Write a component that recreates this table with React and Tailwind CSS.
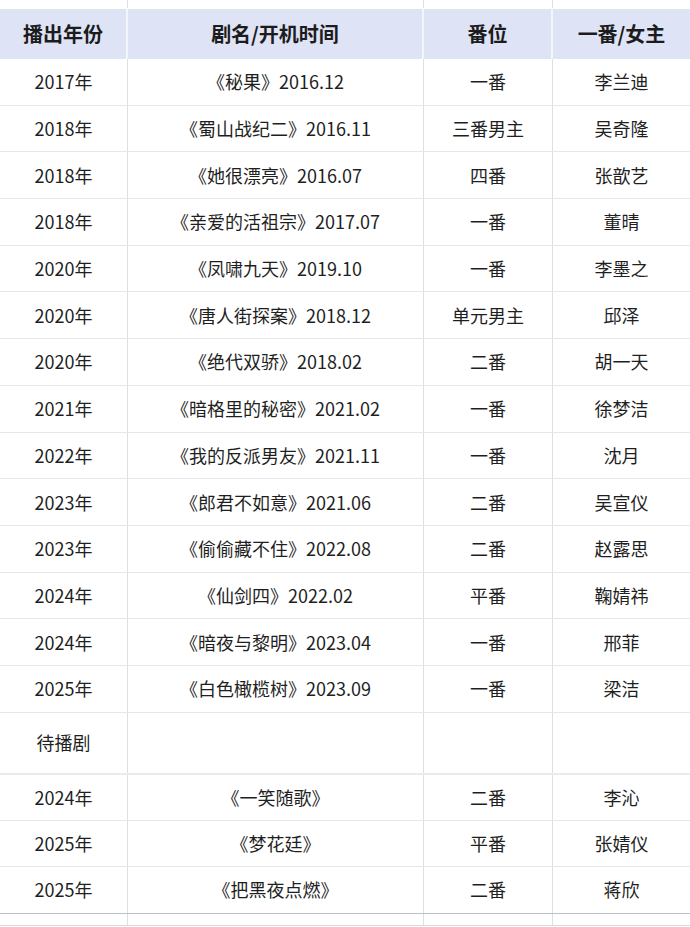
import React from "react";

const COLS = "grid grid-cols-[128px_296px_129px_137px]";
const FONT = { fontFamily: '"Noto Sans CJK SC", "Noto Sans", sans-serif' };

const aired = [
  ["2017年", "《秘果》2016.12", "一番", "李兰迪"],
  ["2018年", "《蜀山战纪二》2016.11", "三番男主", "吴奇隆"],
  ["2018年", "《她很漂亮》2016.07", "四番", "张歆艺"],
  ["2018年", "《亲爱的活祖宗》2017.07", "一番", "董晴"],
  ["2020年", "《凤啸九天》2019.10", "一番", "李墨之"],
  ["2020年", "《唐人街探案》2018.12", "单元男主", "邱泽"],
  ["2020年", "《绝代双骄》2018.02", "二番", "胡一天"],
  ["2021年", "《暗格里的秘密》2021.02", "一番", "徐梦洁"],
  ["2022年", "《我的反派男友》2021.11", "一番", "沈月"],
  ["2023年", "《郎君不如意》2021.06", "二番", "吴宣仪"],
  ["2023年", "《偷偷藏不住》2022.08", "二番", "赵露思"],
  ["2024年", "《仙剑四》2022.02", "平番", "鞠婧祎"],
  ["2024年", "《暗夜与黎明》2023.04", "一番", "邢菲"],
  ["2025年", "《白色橄榄树》2023.09", "一番", "梁洁"],
];

const upcoming = [
  ["2024年", "《一笑随歌》", "二番", "李沁"],
  ["2025年", "《梦花廷》", "平番", "张婧仪"],
  ["2025年", "《把黑夜点燃》", "二番", "蒋欣"],
];

function Row({ cells, h, border = "border-[#e4e7eb]" }) {
  return (
    <div className={`${COLS} ${h} border-b ${border}`}>
      {cells.map((c, i) => (
        <div
          key={i}
          className={`flex items-center justify-center text-[18px] text-[#1f1f1f] ${
            i < 3 ? "border-r border-[#dcdfe4]" : ""
          }`}
        >
          {c}
        </div>
      ))}
    </div>
  );
}

export default function App() {
  return (
    <div className="w-[690px] h-[927px] overflow-hidden bg-white" style={FONT}>
      {/* top strip */}
      <Row cells={["", "", "", ""]} h="h-[9px]" border="border-transparent" />

      {/* header */}
      <div className={`${COLS} h-[50px] bg-[#dfe3f6]`}>
        {["播出年份", "剧名/开机时间", "番位", "一番/女主"].map((t, i) => (
          <div
            key={t}
            className={`flex items-center justify-center text-[20px] font-bold text-[#1c1c1c] ${
              i < 3 ? "border-r-2 border-[#f4f5fb]" : ""
            }`}
          >
            {t}
          </div>
        ))}
      </div>

      {aired.map((r, i) => (
        <Row key={i} cells={r} h="h-[46.7px]" />
      ))}

      <Row cells={["待播剧", "", "", ""]} h="h-[62px]" border="border-[#e9ebee] border-b-2" />

      {upcoming.map((r, i) => (
        <Row
          key={i}
          cells={r}
          h="h-[46.3px]"
          border={i === upcoming.length - 1 ? "border-[#b8c2c8]" : "border-[#e4e7eb]"}
        />
      ))}

      <Row cells={["", "", "", ""]} h="h-[12px]" border="border-[#d6dade]" />
    </div>
  );
}
